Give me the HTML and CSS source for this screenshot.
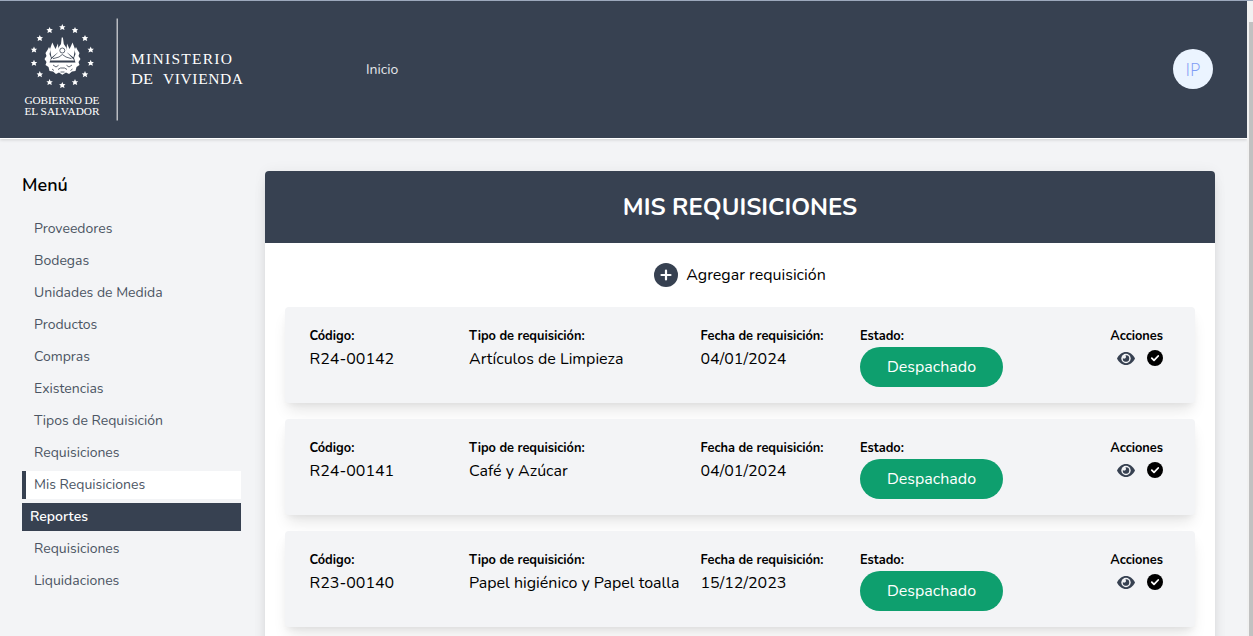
FILE: index.html
```html
<!DOCTYPE html>
<html lang="es">
<head>
<meta charset="utf-8">
<title>Mis requisiciones</title>
<link rel="stylesheet" href="styles.css">
</head>
<body>
<div class="page">
<header class="topbar">
  <svg class="brand" width="230" height="110" viewBox="20 15 230 110" fill="#fff">
    <defs><path id="star" d="M0-3.3 .95-1.1 3.2-1 1.6.5 2.200 2.8 0 1.7-2.200 2.8-1.6.5-3.2-1-.95-1.1Z"/></defs>
    <use href="#star" x="62.3" y="27.3"/><use href="#star" x="75" y="30.2"/><use href="#star" x="85" y="38.2"/><use href="#star" x="90.7" y="49.8"/><use href="#star" x="90.7" y="63"/><use href="#star" x="85" y="74.4"/><use href="#star" x="75" y="82.3"/><use href="#star" x="62.3" y="85.2"/><use href="#star" x="49.6" y="82.3"/><use href="#star" x="39.8" y="74.4"/><use href="#star" x="34" y="63"/><use href="#star" x="34" y="49.8"/><use href="#star" x="39.8" y="38.2"/><use href="#star" x="49.6" y="30.2"/>
    <path d="M61.700 37.500H62.900L63.800 44 66.500 48 67.500 53 74.500 60.500H50L57.500 53 58.200 48 61 44Z"/>
    <path d="M52.300 42.500 54 46 55.500 49 58 43.500 58.500 52 51.500 57.500 50 49ZM72.500 42.500 71 46 69.500 49 67 43.500 66.500 52 73.500 57.500 75 49Z"/>
    <path d="M49 47 47.500 50 45.500 53 46.500 56 44.500 59 46.500 62 45.500 65 48.500 67 49.500 71 53 71.500 56 74 59 72.500 62.300 74.800 66 72.500 69 74 72 71.500 75.500 71 76.500 67 79.500 65 78.500 62 80.500 59 78.500 56 79.500 53 77.500 50 76 47 74.500 50 75.500 54 74 58 75.500 62.500H49.500L51 58 49.500 54 50.500 50Z"/>
    <g fill="none" stroke="#384150" stroke-width=".8"><circle cx="62.300" cy="50.500" r="2.500"/><path d="M53 58.700 59 57 62.300 54.500 66 57 71.500 58.700M50.500 61.600H74.500M53 65 56 67 58.500 65.300M66.500 65.300 69 67 72 65M58 69.500 60.500 68 64.500 68 67 69.500M52 69 54 70.500M72.500 69 70.500 70.500M60.500 72H64.500"/></g>
    <path d="M116.500 18.500H118V120.500H116.500Z" opacity=".65"/>
    <g class="brand-text"><text x="24.500" y="104" font-size="11.300" textLength="75">GOBIERNO DE</text><text x="24.500" y="115" font-size="11.300" textLength="75">EL SALVADOR</text><text x="131" y="64.200" font-size="15.500" textLength="101">MINISTERIO</text><text x="131" y="84.200" font-size="15.500" textLength="22" lengthAdjust="spacingAndGlyphs">DE</text><text x="163" y="84.200" font-size="15.500" textLength="80">VIVIENDA</text></g>
  </svg>
  <a class="home">Inicio</a>
  <div class="avatar">IP</div>
</header>
<div class="content">
  <nav class="sidebar">
    <h2 class="menu-title">Menú</h2>
    <a class="link">Proveedores</a>
    <a class="link">Bodegas</a>
    <a class="link">Unidades de Medida</a>
    <a class="link">Productos</a>
    <a class="link">Compras</a>
    <a class="link">Existencias</a>
    <a class="link">Tipos de Requisición</a>
    <a class="link">Requisiciones</a>
    <a class="link active">Mis Requisiciones</a>
    <div class="section">Reportes</div>
    <a class="link">Requisiciones</a>
    <a class="link">Liquidaciones</a>
  </nav>
  <main class="panel">
    <h1 class="panel-title"><span>MIS REQUISICIONES</span></h1>
    <a class="add"><svg width="24" height="24" viewBox="0 0 24 24"><circle cx="12" cy="12" r="12" fill="#374151"/><path d="M12 7.500V16.500M7.500 12H16.500" stroke="#fff" stroke-width="2.200" stroke-linecap="round"/></svg><span>Agregar requisición</span></a>
    <svg width="0" height="0" class="defs"><defs>
      <g id="eye"><path d="M0 7.500C2 3.500 5.200 1 9 1S16 3.500 18 7.500C16 11.500 12.800 14 9 14S2 11.500 0 7.500Z" fill="#374151"/><circle cx="9" cy="7.500" r="4.700" fill="#f3f4f6"/><path d="M9 4.300A3.200 3.200 0 1 1 5.900 6.900 1.700 1.700 0 0 0 8.900 6.500 2.500 2.500 0 0 0 8.400 4.350Z" fill="#374151"/></g>
      <g id="check"><circle cx="8" cy="8" r="8"/><path d="M4.800 8.200 7 10.400 11.200 6" fill="none" stroke="#fff" stroke-width="1.800" stroke-linecap="round" stroke-linejoin="round"/></g>
    </defs></svg>
    <article class="card">
      <div><h3>Código:</h3><p class="code">R24-00142</p></div>
      <div><h3>Tipo de requisición:</h3><p>Artículos de Limpieza</p></div>
      <div><h3>Fecha de requisición:</h3><p class="date">04/01/2024</p></div>
      <div><h3>Estado:</h3><span class="status">Despachado</span></div>
      <div class="actions"><h3>Acciones</h3><div class="icons"><svg width="18" height="15"><use href="#eye"/></svg><svg width="16" height="16"><use href="#check"/></svg></div></div>
    </article>
    <article class="card">
      <div><h3>Código:</h3><p class="code">R24-00141</p></div>
      <div><h3>Tipo de requisición:</h3><p>Café y Azúcar</p></div>
      <div><h3>Fecha de requisición:</h3><p class="date">04/01/2024</p></div>
      <div><h3>Estado:</h3><span class="status">Despachado</span></div>
      <div class="actions"><h3>Acciones</h3><div class="icons"><svg width="18" height="15"><use href="#eye"/></svg><svg width="16" height="16"><use href="#check"/></svg></div></div>
    </article>
    <article class="card">
      <div><h3>Código:</h3><p class="code">R23-00140</p></div>
      <div><h3>Tipo de requisición:</h3><p>Papel higiénico y Papel toalla</p></div>
      <div><h3>Fecha de requisición:</h3><p class="date">15/12/2023</p></div>
      <div><h3>Estado:</h3><span class="status">Despachado</span></div>
      <div class="actions"><h3>Acciones</h3><div class="icons"><svg width="18" height="15"><use href="#eye"/></svg><svg width="16" height="16"><use href="#check"/></svg></div></div>
    </article>
  </main>
</div>
</div>
<div class="scroll"><div class="thumb"></div></div>
</body>
</html>
```
FILE: styles.css
```css
*{box-sizing:border-box}
body{margin:0;height:636px;overflow:hidden;display:flex;background:#f3f4f6;font-family:Nunito,Lato,sans-serif;font-size:16px;color:#000}
h1,h2,h3,p{margin:0}
.page{width:1247px;height:636px;overflow:hidden}
.topbar{height:139px;background:#374151;border-top:1px solid #9ca8bc;border-bottom:1px solid #fff;box-shadow:0 1px 3px rgba(0,0,0,.15);display:flex;align-items:center;padding:0 34px 0 20px}
.brand{flex:none}
.brand-text{font-family:"Liberation Serif",serif}
.home{margin-left:116px;font-size:14px;line-height:20px;color:#e5e7eb}
.avatar{margin-left:auto;margin-bottom:2px;width:40px;height:40px;border-radius:50%;background:#ebf4ff;color:#7f9cf5;text-align:center;line-height:40px;font-family:"Open Sans",sans-serif;font-size:18px;font-weight:300}
.content{display:flex;padding:32px 32px 0 22px}
.sidebar{width:219px;margin-right:24px;flex:none;display:flex;flex-direction:column;gap:4px}
.menu-title{font-size:18px;line-height:28px;font-weight:600;margin-bottom:12px}
.link{height:28px;line-height:28px;padding-left:12px;font-size:14px;color:#4b5563}
.active{background:#fff;border-left:4px solid #374151;padding-left:8px}
.section{height:28px;line-height:28px;padding-left:8px;background:#374151;color:#fff;font-size:14px;font-weight:600}
.panel{width:950px;height:500px;background:#fff;border-radius:4px 4px 0 0;box-shadow:0 10px 15px -3px rgba(0,0,0,.1),0 4px 6px -2px rgba(0,0,0,.05),0 0 14px rgba(0,0,0,.05)}
.panel-title{height:72px;background:#374151;color:#fff;border-radius:4px 4px 0 0;font-size:24px;line-height:72px;text-align:center;font-weight:700}
.add{height:64px;display:flex;align-items:center;justify-content:center;gap:8px}
.defs{display:block}
.card{margin:0 20px 16px;height:96px;padding:20px 32px 0 24.500px;background:#f3f4f6;border-radius:4px;box-shadow:0 10px 15px -3px rgba(0,0,0,.1),0 4px 6px -2px rgba(0,0,0,.05);display:grid;grid-template-columns:159.500px 231.500px 159.500px 1fr auto;white-space:nowrap}
.card h3{font-size:12.8px;line-height:18px;height:20px;font-weight:700}
.card p{line-height:24px}
.status{display:block;width:143px;height:40px;line-height:40px;border-radius:20px;background:#0e9f6e;color:#fff;text-align:center}
.icons{display:flex;align-items:center;justify-content:flex-end;gap:12px;height:22px}
.scroll{width:6px;background:#f1f1f1;padding:21px 0 0 2px;border-top:1px solid #9ca8bc}
.thumb{height:614px;background:#c1c1c1}
```
